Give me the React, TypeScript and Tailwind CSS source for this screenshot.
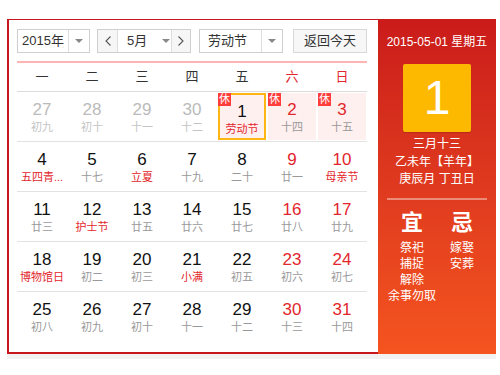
import { clsx } from "clsx";

// Perpetual calendar widget: month grid on the left, day almanac on the right.

type Day = {
  n: number;
  lunar: string;
  prev?: boolean; // belongs to last month
  weekend?: boolean;
  fest?: boolean; // lunar line is a festival / solar term
  rest?: boolean; // 休 badge
  selected?: boolean;
};

const WEEK = ["一", "二", "三", "四", "五", "六", "日"];

const ROWS: Day[][] = [
  [
    { n: 27, lunar: "初九", prev: true },
    { n: 28, lunar: "初十", prev: true },
    { n: 29, lunar: "十一", prev: true },
    { n: 30, lunar: "十二", prev: true },
    { n: 1, lunar: "劳动节", fest: true, rest: true, selected: true },
    { n: 2, lunar: "十四", weekend: true, rest: true },
    { n: 3, lunar: "十五", weekend: true, rest: true },
  ],
  [
    { n: 4, lunar: "五四青...", fest: true },
    { n: 5, lunar: "十七" },
    { n: 6, lunar: "立夏", fest: true },
    { n: 7, lunar: "十九" },
    { n: 8, lunar: "二十" },
    { n: 9, lunar: "廿一", weekend: true },
    { n: 10, lunar: "母亲节", weekend: true, fest: true },
  ],
  [
    { n: 11, lunar: "廿三" },
    { n: 12, lunar: "护士节", fest: true },
    { n: 13, lunar: "廿五" },
    { n: 14, lunar: "廿六" },
    { n: 15, lunar: "廿七" },
    { n: 16, lunar: "廿八", weekend: true },
    { n: 17, lunar: "廿九", weekend: true },
  ],
  [
    { n: 18, lunar: "博物馆日", fest: true },
    { n: 19, lunar: "初二" },
    { n: 20, lunar: "初三" },
    { n: 21, lunar: "小满", fest: true },
    { n: 22, lunar: "初五" },
    { n: 23, lunar: "初六", weekend: true },
    { n: 24, lunar: "初七", weekend: true },
  ],
  [
    { n: 25, lunar: "初八" },
    { n: 26, lunar: "初九" },
    { n: 27, lunar: "初十" },
    { n: 28, lunar: "十一" },
    { n: 29, lunar: "十二" },
    { n: 30, lunar: "十三", weekend: true },
    { n: 31, lunar: "十四", weekend: true },
  ],
];

function Caret() {
  return <span className="block h-0 w-0 border-x-[4px] border-t-[4px] border-x-transparent border-t-[#888]" />;
}

function Chevron({ dir }: { dir: "left" | "right" }) {
  return (
    <svg width="6" height="10" viewBox="0 0 6 10" fill="none" stroke="#555" strokeWidth="1.1">
      {dir === "left" ? <path d="M5.5 0.5 1 5l4.5 4.5" /> : <path d="M0.5 0.5 5 5 0.5 9.5" />}
    </svg>
  );
}

function Cell({ d }: { d: Day }) {
  return (
    <div className="relative h-full w-[50px] p-px">
      <div
        className={clsx(
          "flex h-full flex-col items-center pt-[7px]",
          d.rest && "bg-[#fff0f0]",
          d.selected && "border-2 border-[#fdb614] pt-[5px]",
        )}
      >
        <span
          className={clsx(
            "text-[17px] leading-[20px]",
            d.prev ? "text-[#bbbbbb]" : d.weekend ? "text-[#e3262d]" : "text-[#111]",
          )}
        >
          {d.n}
        </span>
        <span
          className={clsx(
            "whitespace-nowrap text-[11px] leading-[15px]",
            d.prev ? "text-[#c4c4c4]" : d.fest ? "text-[#e3262d]" : "text-[#999]",
          )}
        >
          {d.lunar}
        </span>
      </div>
      {d.rest && (
        <span className="absolute left-px top-px flex h-[13px] w-[13px] items-center justify-center bg-[#ff3d3d] text-[11px] leading-none text-white">
          休
        </span>
      )}
    </div>
  );
}

export default function App() {
  return (
    <div
      className="min-h-[375px] bg-white pl-[7px] pt-[19px]"
      style={{ fontFamily: '"Liberation Sans", "Noto Sans CJK SC", sans-serif' }}
    >
      <div className="flex h-[335px] w-[489px] shadow-[0_5px_0_0_#f2f2f2]">
        {/* month grid */}
        <div className="w-[371px] border-b-2 border-l-2 border-t border-[#c8161d] bg-white pl-2 pt-[9px]">
          <div className="flex h-6 items-stretch text-[13px] text-[#333]">
            <div className="flex w-[73px] border border-[#cfcfcf]">
              <span className="flex flex-1 items-center justify-center">2015年</span>
              <span className="flex w-[21px] items-center justify-center border-l border-[#ddd]">
                <Caret />
              </span>
            </div>
            <div className="ml-[7px] flex w-[94px] border border-[#cfcfcf]">
              <span className="flex w-[20px] items-center justify-center border-r border-[#ddd] bg-[#f6f6f6]">
                <Chevron dir="left" />
              </span>
              <span className="flex flex-1 items-center pl-[9px]">
                5月
                <span className="ml-[15px]">
                  <Caret />
                </span>
              </span>
              <span className="flex w-[19px] items-center justify-center border-l border-[#ddd] bg-[#f6f6f6]">
                <Chevron dir="right" />
              </span>
            </div>
            <div className="ml-2 flex w-[84px] border border-[#cfcfcf]">
              <span className="flex flex-1 items-center pl-2">劳动节</span>
              <span className="flex w-[21px] items-center justify-center border-l border-[#ddd]">
                <Caret />
              </span>
            </div>
            <button className="ml-[10px] flex w-[74px] items-center justify-center border border-[#d8d8d8] bg-[#f7f7f7] text-[#333]">
              返回今天
            </button>
          </div>

          <div className="mt-[8px] w-[350px] border-t-2 border-[#ffb3b3]">
            <div className="flex h-[29px] items-center border-b border-[#dcdcdc]">
              {WEEK.map((w, i) => (
                <span
                  key={w}
                  className={clsx("w-[50px] text-center text-[13px]", i >= 5 ? "text-[#e3262d]" : "text-[#333]")}
                >
                  {w}
                </span>
              ))}
            </div>
            {ROWS.map((row, i) => (
              <div
                key={i}
                className={clsx("flex h-[50px]", i < ROWS.length - 1 && "border-b border-[#e2e2e2]")}
              >
                {row.map((d) => (
                  <Cell key={`${i}-${d.n}`} d={d} />
                ))}
              </div>
            ))}
          </div>
        </div>

        {/* almanac */}
        <div className="flex w-[118px] flex-col items-center bg-gradient-to-b from-[#ca1a1a] via-[#df3a1f] to-[#f5541f] text-white">
          <div className="mt-[15px] text-[12px] leading-4">2015-05-01 星期五</div>
          <div className="mt-[14px] flex h-[68px] w-[68px] items-center justify-center rounded-[2px] bg-[#fdb900] text-[48px] leading-none shadow-[0_1px_1px_rgba(0,0,0,0.15)]">
            1
          </div>
          <div className="mt-[4px] text-center text-[12px] leading-[17.5px]">
            <div>三月十三</div>
            <div>乙未年【羊年】</div>
            <div>庚辰月 丁丑日</div>
          </div>
          <div className="mt-[9px] h-[2px] w-[100px] bg-white/40" />
          <div className="mt-[10px] grid w-[100px] grid-cols-2 text-center">
            <div className="text-[22px] font-bold leading-[26px]">宜</div>
            <div className="text-[22px] font-bold leading-[26px]">忌</div>
            <div className="mt-1 text-[12px] leading-4">
              <div>祭祀</div>
              <div>捕捉</div>
              <div>解除</div>
              <div className="whitespace-nowrap">余事勿取</div>
            </div>
            <div className="mt-1 text-[12px] leading-4">
              <div>嫁娶</div>
              <div>安葬</div>
            </div>
          </div>
        </div>
      </div>
    </div>
  );
}
